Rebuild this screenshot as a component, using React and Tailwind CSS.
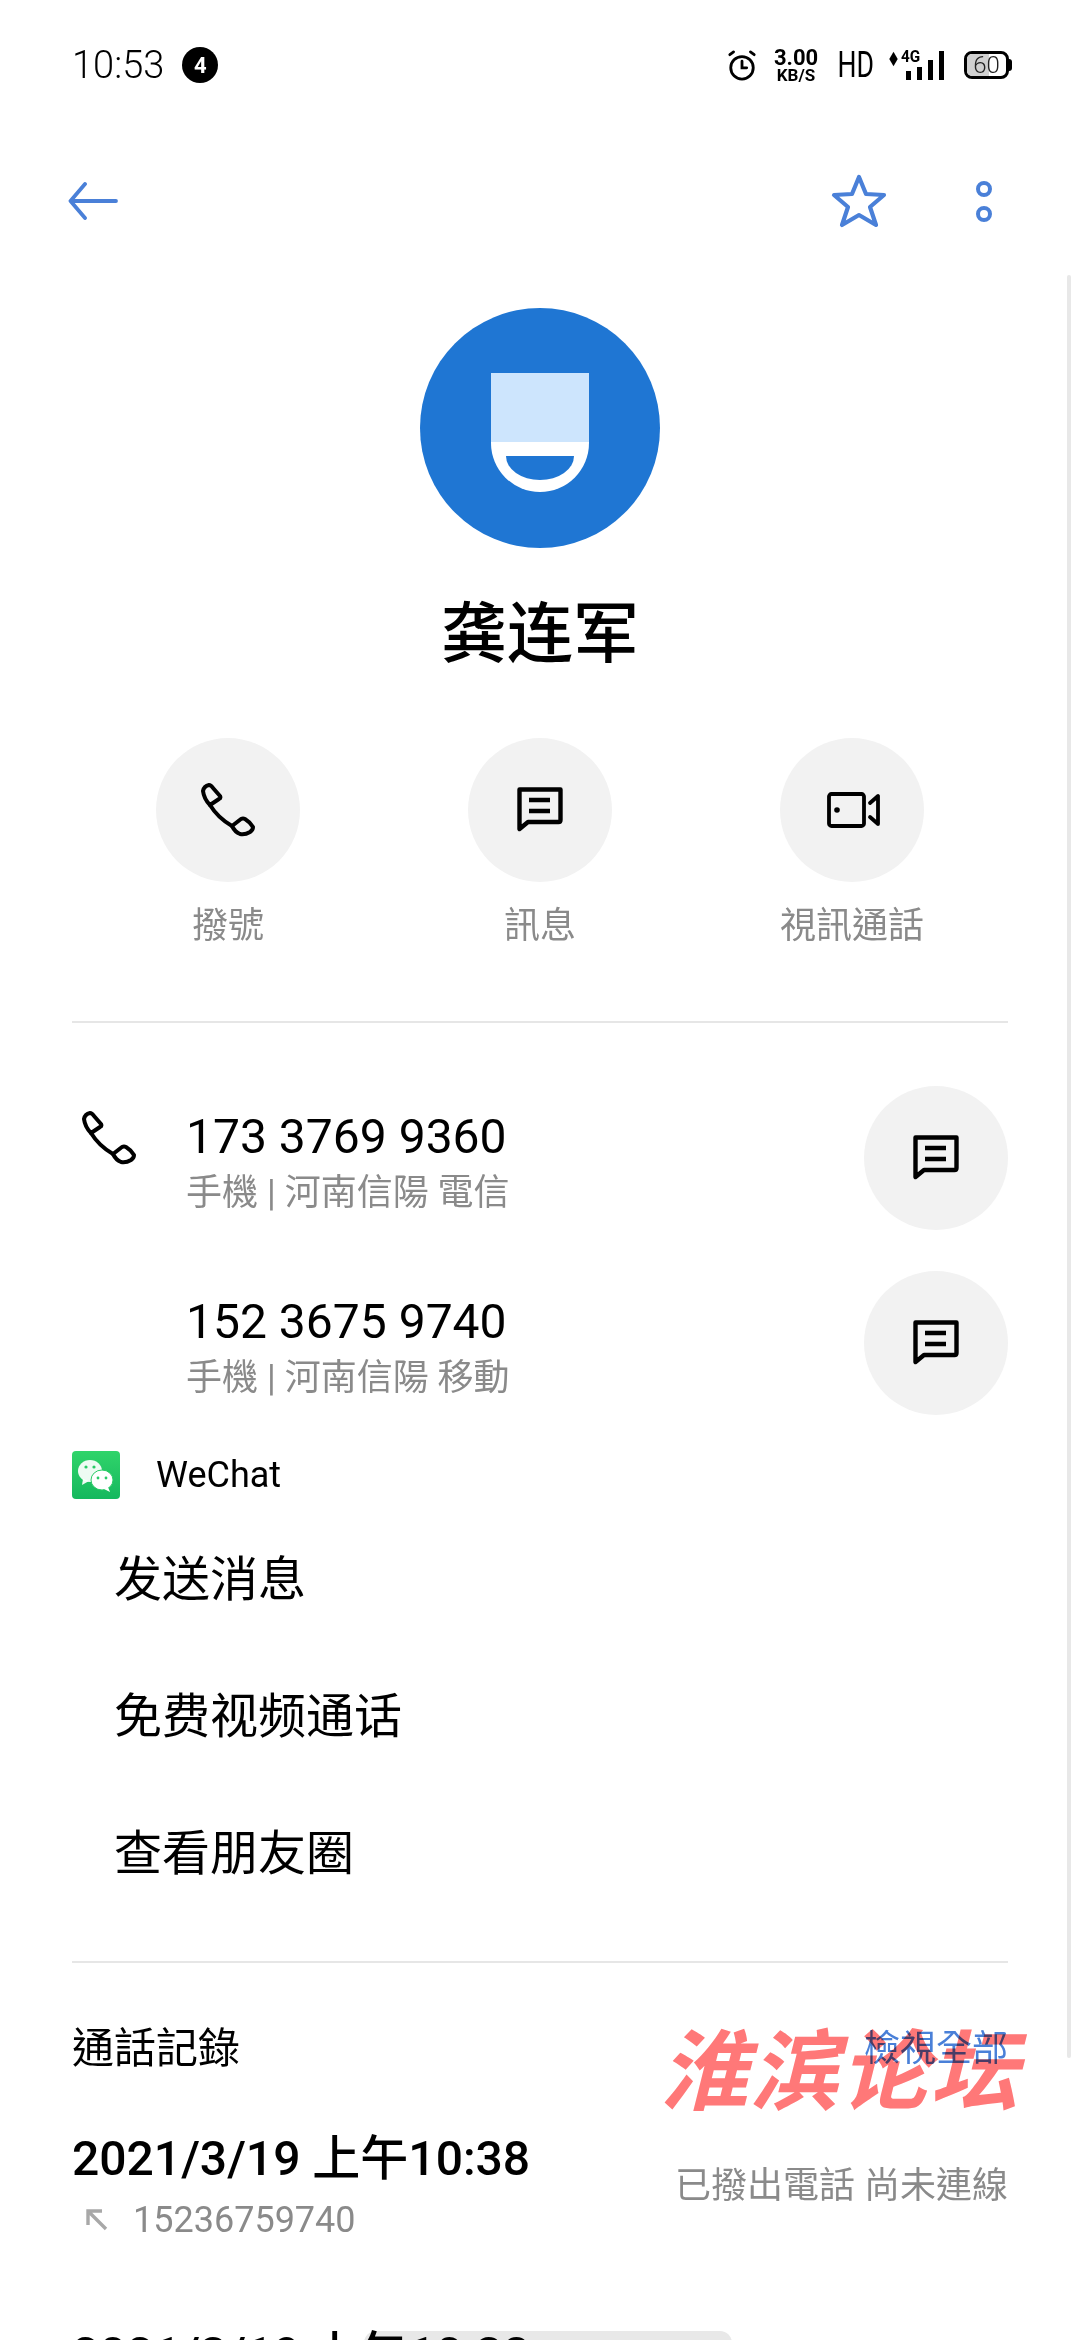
const cjk = "font-['Roboto','Noto_Sans_CJK_TC',sans-serif]"

function PhoneIcon({ className }) {
  return (
    <svg viewBox="0 0 54 54" fill="none" stroke="#000" strokeWidth="4" strokeLinejoin="round" strokeLinecap="round" className={className}>
      <path d="M2 8 Q3 3 8 2 Q10 2 12 5 L19 13 Q20 15 18 16 L9 22 Q3 16 2 8 Z" />
      <path d="M31 43 L40 36 Q42 35 44 36 Q49 39 52 44 Q52 47 49 49 Q44 52 39 51 Q34 49 31 43 Z" />
      <path d="M9 22 Q17 35 31 43" />
    </svg>
  )
}

function MessageIcon({ className }) {
  return (
    <svg viewBox="0 0 46 46" fill="none" stroke="#000" strokeWidth="4.4" className={className}>
      <path d="M2.5 2.5 H43.5 V33 Q43.5 35 41.5 35 H11 L2.5 42 Z" strokeLinejoin="round" />
      <path d="M12 13 H33 M12 24 H33" />
    </svg>
  )
}

function VideoIcon({ className }) {
  return (
    <svg viewBox="0 0 56 36" fill="none" stroke="#000" strokeWidth="3.8" strokeLinejoin="round" strokeLinecap="round" className={className}>
      <rect x="5" y="2" width="35" height="32" rx="2.5" />
      <circle cx="13" cy="18" r="2.8" fill="#000" stroke="none" />
      <path d="M46 11 L54 4 V32 L46 25" />
    </svg>
  )
}

function ActionButton({ icon, label }) {
  return (
    <div className="w-[200px] flex flex-col items-center">
      <div className="w-36 h-36 rounded-full bg-[#f2f2f2] flex items-center justify-center">{icon}</div>
      <div className="mt-[23px] text-[36px] leading-[42px] text-[#8a8a8a] whitespace-nowrap">{label}</div>
    </div>
  )
}

function PhoneRow({ number, info, showIcon, className }) {
  return (
    <div className={`flex items-start ${className}`}>
      <div className="w-[114px] shrink-0 pt-[25px] pl-[10px]">
        {showIcon && <PhoneIcon className="w-[54px] h-[54px]" />}
      </div>
      <div className="flex-1 pt-[23px]">
        <div className="text-[48px] leading-[56px] text-black">{number}</div>
        <div className="mt-[7px] text-[36px] leading-[42px] text-[#8a8a8a] whitespace-nowrap">{info}</div>
      </div>
      <div className="w-36 h-36 rounded-full bg-[#f2f2f2] flex items-center justify-center">
        <MessageIcon className="w-[46px] h-[46px]" />
      </div>
    </div>
  )
}

function StatusBar() {
  return (
    <div className="h-[130px] pl-[72px] pr-[68px] flex items-center justify-between">
      <div className="flex items-center gap-[18px]">
        <span className="text-[38px] font-light leading-none text-black">10:53</span>
        <span className="w-9 h-9 rounded-full bg-black text-white text-[22px] font-bold flex items-center justify-center">4</span>
      </div>
      <div className="flex items-center">
        <svg viewBox="0 0 32 34" fill="none" stroke="#000" strokeWidth="3" strokeLinecap="round" className="w-[30px] h-[32px]">
          <circle cx="16" cy="20" r="12" />
          <path d="M16 13 V20 H21 M3 6 L7 3 M29 6 L25 3" />
        </svg>
        <div className="ml-[16px] w-[46px] flex flex-col items-center text-black font-bold">
          <span className="text-[22px] leading-[21px]">3.00</span>
          <span className="text-[17px] leading-[15px]">KB/S</span>
        </div>
        <div className="ml-[19px] w-[36px] flex justify-center">
          <span className="text-[36px] leading-none text-black scale-x-[0.74]">HD</span>
        </div>
        <div className="ml-[15px] w-[55px] h-[30px] relative">
          <span className="absolute left-[11px] -top-[4px] text-[17px] font-bold leading-[20px] text-black scale-x-90">4G</span>
          <span className="absolute left-0 top-[2px] text-[9px] leading-[8px] text-black">▲</span>
          <span className="absolute left-0 top-[9px] text-[9px] leading-[8px] text-black">▼</span>
          <div className="absolute left-[17px] bottom-0 flex items-end gap-[6px]">
            <div className="w-[5px] h-[9px] bg-black" />
            <div className="w-[5px] h-[13px] bg-black" />
            <div className="w-[5px] h-[20px] bg-black" />
            <div className="w-[5px] h-[29px] bg-black" />
          </div>
        </div>
        <div className="ml-[20px] w-[45px] h-[28px] rounded-[8px] border-[3px] border-black relative flex items-center justify-center overflow-hidden">
          <div className="absolute left-0 top-0 bottom-0 w-[22px] bg-[#d0d0d0]" />
          <span className="relative text-[24px] leading-none text-[#222] font-light">60</span>
        </div>
        <div className="w-[3px] h-[12px] bg-black rounded-r" />
      </div>
    </div>
  )
}

export default function App() {
  return (
    <div className={`relative w-[1080px] h-[2340px] overflow-hidden bg-white ${cjk}`}>
      <StatusBar />

      <div className="mt-[34px] h-[74px] pl-[68px] pr-[86px] flex items-center justify-between">
        <svg viewBox="0 0 50 38" fill="none" stroke="#4a80d8" strokeWidth="3.8" strokeLinecap="round" strokeLinejoin="round" className="w-[50px] h-[38px]">
          <path d="M48 19 H3 M17 2 L2.5 19 L17 36" />
        </svg>
        <div className="flex items-center">
          <svg viewBox="0 0 56 54" fill="none" stroke="#4a80d8" strokeWidth="4.2" strokeLinejoin="round" className="w-[56px] h-[54px]">
            <path d="M28 3 L35 20 L53 21 L39 33 L45 51 L28 41 L11 51 L17 33 L3 21 L21 20 Z" />
          </svg>
          <div className="ml-[87px] w-[20px] flex flex-col items-center gap-[9px]">
            <div className="w-[16px] h-[16px] rounded-full border-[4px] border-[#4a80d8]" />
            <div className="w-[16px] h-[16px] rounded-full border-[4px] border-[#4a80d8]" />
          </div>
        </div>
      </div>

      <div className="flex flex-col items-center pt-[70px]">
        <div className="w-60 h-60 rounded-full bg-[#1f76d3] flex items-center justify-center">
          <div className="mt-[9px] w-[98px] h-[119px] flex flex-col">
            <div className="h-[69px] bg-[#cde5fd]" />
            <div className="h-[50px] bg-white rounded-b-[49px] flex justify-center">
              <div className="mt-[14px] w-[68px] h-[24px] bg-[#1f76d3] rounded-[0_0_34px_34px/0_0_24px_24px]" />
            </div>
          </div>
        </div>
        <div className="mt-[42px] text-[66px] leading-[76px] font-medium text-black font-['Noto_Sans_CJK_SC',sans-serif]">龚连军</div>
      </div>

      <div className="mt-[72px] px-[128px] flex justify-between">
        <ActionButton label="撥號" icon={<PhoneIcon className="w-[54px] h-[54px]" />} />
        <ActionButton label="訊息" icon={<MessageIcon className="w-[46px] h-[46px]" />} />
        <ActionButton label="視訊通話" icon={<VideoIcon className="w-[56px] h-[36px]" />} />
      </div>

      <div className="mt-[74px] mx-[72px] h-[2px] bg-[#e6e6e6]" />

      <div className="mx-[72px] mt-[63px]">
        <PhoneRow showIcon number="173 3769 9360" info="手機 | 河南信陽 電信" />
        <PhoneRow number="152 3675 9740" info="手機 | 河南信陽 移動" className="mt-[41px]" />
        <div className="mt-[36px] flex items-center">
          <div className="w-12 h-12 rounded-[4px] bg-gradient-to-b from-[#2fd46a] to-[#14b85e] flex items-center justify-center">
            <svg viewBox="0 0 48 48" className="w-12 h-12">
              <ellipse cx="18" cy="20" rx="12" ry="11" fill="#fff" fillOpacity="0.92" />
              <path d="M11 28 L10 34 L17 30 Z" fill="#fff" fillOpacity="0.92" />
              <ellipse cx="30" cy="29" rx="11" ry="10" fill="#fff" stroke="#2acb66" strokeWidth="1" />
              <path d="M36 36 L38 41 L32 38 Z" fill="#fff" />
              <circle cx="14" cy="16" r="1.6" fill="#2acb66" />
              <circle cx="22" cy="16" r="1.6" fill="#2acb66" />
              <circle cx="26" cy="27" r="1.4" fill="#2acb66" />
              <circle cx="34" cy="27" r="1.4" fill="#2acb66" />
            </svg>
          </div>
          <span className="ml-[36px] text-[36px] leading-[42px] text-black">WeChat</span>
        </div>
        <div className="mt-[48px] pl-[42px] flex flex-col gap-[81px] text-[48px] leading-[56px] text-black font-['Noto_Sans_CJK_SC',sans-serif]">
          <span>发送消息</span>
          <span>免费视频通话</span>
          <span>查看朋友圈</span>
        </div>
      </div>

      <div className="mt-[84px] mx-[72px] h-[2px] bg-[#e6e6e6]" />

      <div className="mx-[72px] mt-[61px] flex items-center justify-between">
        <span className="text-[42px] leading-[50px] text-black">通話記錄</span>
        <span className="text-[36px] leading-[42px] text-[#4a80d8]">檢視全部</span>
      </div>

      <div className="mx-[72px] mt-[57px] flex items-start justify-between">
        <div>
          <div className="text-[48px] leading-[56px] font-medium text-black">2021/3/19 上午10:38</div>
          <div className="mt-[12px] flex items-center">
            <svg viewBox="0 0 24 24" fill="none" stroke="#a8a8a8" strokeWidth="3.4" className="ml-[13px] w-[24px] h-[24px]">
              <path d="M3 17 V3 H17 M3 3 L21 21" />
            </svg>
            <span className="ml-[24px] text-[36px] leading-[42px] text-[#8a8a8a]">15236759740</span>
          </div>
        </div>
        <span className="mt-[34px] text-[36px] leading-[42px] text-[#8a8a8a]">已撥出電話 尚未連線</span>
      </div>

      {/* toast pill sits behind the last row's text */}
      <div className="absolute left-[364px] top-[2331px] w-[368px] h-[40px] rounded-[12px] bg-[#e8e8e8]" />
      <div className="relative mx-[72px] mt-[86px] text-[48px] leading-[56px] font-medium text-black">2021/3/19 上午10:38</div>

      {/* scrollbar */}
      <div className="absolute right-[9px] top-[275px] w-[4px] h-[1783px] rounded-full bg-[#e8e8e8]" />
      {/* forum watermark */}
      <div className="absolute left-[660px] top-[2010px] w-[358px] flex justify-between text-[88px] leading-[110px] font-bold text-[#ff7878] italic mix-blend-multiply font-['Noto_Sans_CJK_SC',sans-serif]">
        <span>淮</span>
        <span>滨</span>
        <span>论</span>
        <span>坛</span>
      </div>
    </div>
  )
}
